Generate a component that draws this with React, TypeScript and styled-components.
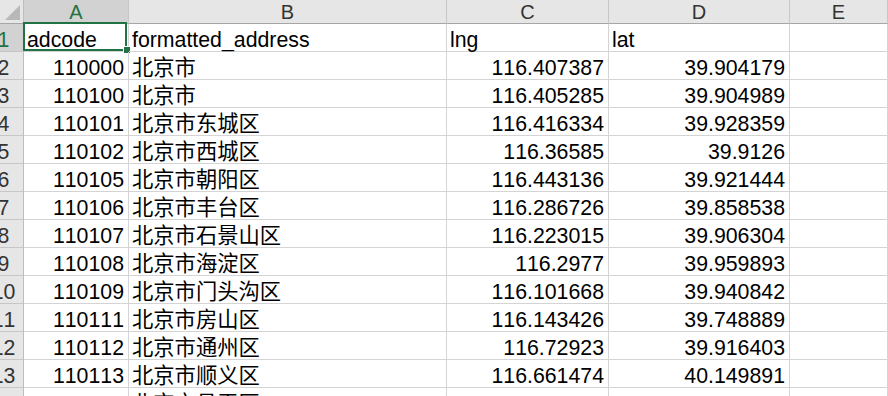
import React from "react";
import styled, { createGlobalStyle, css } from "styled-components";

const Global = createGlobalStyle`
  html, body { margin: 0; padding: 0; background: #ffffff; }
  body { width: 888px; height: 396px; overflow: hidden; }
`;

const GREEN = "#217346";

const Sheet = styled.div`
  width: 904px;
  margin-left: -16px;
  display: grid;
  grid-template-columns: 40px 105px 318px 162px 181px 1fr;
  grid-auto-rows: 28px;
  grid-template-rows: 24px;
  font-family: "Liberation Sans", "Noto Sans CJK SC", sans-serif;
  font-size: 21.3px;
  font-kerning: none;
  color: #000;
`;

const Corner = styled.div`
  position: relative;
  background: #e6e6e6;
  border-right: 1px solid #bdbdbd;
  border-bottom: 1px solid #a6a6a6;
  box-sizing: border-box;
  &::after {
    content: "";
    position: absolute;
    right: 3px;
    bottom: 3px;
    width: 0;
    height: 0;
    border-left: 15px solid transparent;
    border-bottom: 15px solid #b8b8b8;
  }
`;

const ColHead = styled.div<{ $sel?: boolean }>`
  box-sizing: border-box;
  background: ${(p) => (p.$sel ? "#d2d2d2" : "#e6e6e6")};
  border-right: 1px solid #c6c6c6;
  border-bottom: 1px solid #a6a6a6;
  display: flex;
  align-items: center;
  justify-content: center;
  font-size: 20px;
  line-height: 22px;
  color: ${(p) => (p.$sel ? GREEN : "#333")};
`;

const RowHead = styled.div<{ $sel?: boolean }>`
  box-sizing: border-box;
  background: ${(p) => (p.$sel ? "#d2d2d2" : "#e6e6e6")};
  border-right: 1px solid #bdbdbd;
  border-bottom: 1px solid #c6c6c6;
  display: flex;
  align-items: flex-end;
  justify-content: center;
  line-height: 20px;
  padding-bottom: 1px;
  color: ${(p) => (p.$sel ? GREEN : "#333")};
`;

const Cell = styled.div<{ $num?: boolean }>`
  position: relative;
  box-sizing: border-box;
  border-right: 1px solid #d4d4d4;
  border-bottom: 1px solid #d4d4d4;
  display: flex;
  align-items: flex-end;
  justify-content: ${(p) => (p.$num ? "flex-end" : "flex-start")};
  padding: 0 3px 1px 3px;
  line-height: 20px;
  white-space: nowrap;
  overflow: visible;
  ${(p) =>
    p.$num &&
    css`
      padding-right: 4px;
    `}
`;

const Selection = styled.div`
  position: absolute;
  left: -1px;
  top: -2px;
  width: 104px;
  height: 29px;
  box-sizing: border-box;
  border: 2px solid ${GREEN};
  pointer-events: none;
  &::after {
    content: "";
    position: absolute;
    right: -5px;
    bottom: -4px;
    width: 6px;
    height: 6px;
    background: ${GREEN};
    box-shadow: 0 0 0 1px #ffffff;
  }
`;

type Row = [string, string, string, string];

const rows: Row[] = [
  ["110000", "北京市", "116.407387", "39.904179"],
  ["110100", "北京市", "116.405285", "39.904989"],
  ["110101", "北京市东城区", "116.416334", "39.928359"],
  ["110102", "北京市西城区", "116.36585", "39.9126"],
  ["110105", "北京市朝阳区", "116.443136", "39.921444"],
  ["110106", "北京市丰台区", "116.286726", "39.858538"],
  ["110107", "北京市石景山区", "116.223015", "39.906304"],
  ["110108", "北京市海淀区", "116.2977", "39.959893"],
  ["110109", "北京市门头沟区", "116.101668", "39.940842"],
  ["110111", "北京市房山区", "116.143426", "39.748889"],
  ["110112", "北京市通州区", "116.72923", "39.916403"],
  ["110113", "北京市顺义区", "116.661474", "40.149891"],
  ["110114", "北京市昌平区", "116.235906", "40.218085"],
];

export default function App() {
  return (
    <>
      <Global />
      <Sheet>
        <Corner />
        <ColHead $sel>A</ColHead>
        <ColHead>B</ColHead>
        <ColHead>C</ColHead>
        <ColHead>D</ColHead>
        <ColHead>E</ColHead>

        <RowHead $sel>1</RowHead>
        <Cell>
          adcode
          <Selection />
        </Cell>
        <Cell>formatted_address</Cell>
        <Cell>lng</Cell>
        <Cell>lat</Cell>
        <Cell />

        {rows.map((r, i) => (
          <React.Fragment key={r[0]}>
            <RowHead>{i + 2}</RowHead>
            <Cell $num>{r[0]}</Cell>
            <Cell>{r[1]}</Cell>
            <Cell $num>{r[2]}</Cell>
            <Cell $num>{r[3]}</Cell>
            <Cell />
          </React.Fragment>
        ))}
      </Sheet>
    </>
  );
}
